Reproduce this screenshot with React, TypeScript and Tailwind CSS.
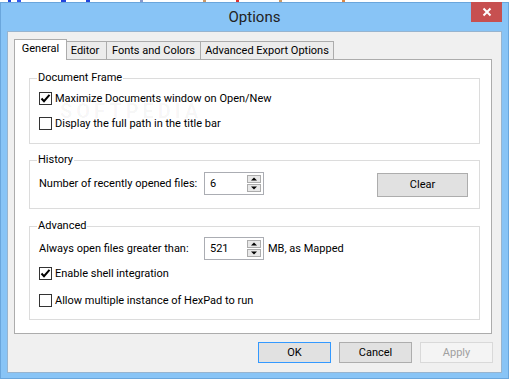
import React from "react";

function Check({ checked }: { checked: boolean }) {
  return (
    <span className="w-[13px] h-[13px] border border-[#333333] bg-white flex items-center justify-center shrink-0">
      {checked && (
        <svg width="11" height="11" viewBox="0 0 11 11">
          <path d="M1.5 5.5 L4 8.2 L9.5 1.8" fill="none" stroke="#000" strokeWidth="2" />
        </svg>
      )}
    </span>
  );
}

function CheckRow({ checked, label, h }: { checked: boolean; label: string; h: string }) {
  return (
    <div className={`flex items-center ${h}`}>
      <Check checked={checked} />
      <span className="ml-[3px] leading-[16px]">{label}</span>
    </div>
  );
}

function Arrow({ up }: { up: boolean }) {
  return (
    <span className="w-[14px] h-[8px] border border-[#acacac] bg-[#e8e8e8] flex items-center justify-center">
      <svg width="6" height="4" viewBox="0 0 6 4">
        {up ? <path d="M0 3.5 L3 0.5 L6 3.5 Z" fill="#000" /> : <path d="M0 0.5 L3 3.5 L6 0.5 Z" fill="#000" />}
      </svg>
    </span>
  );
}

function Spin({ value }: { value: string }) {
  return (
    <div className="w-[60px] h-[23px] border border-[#abadb3] bg-white flex items-center shrink-0">
      <span className="flex-1 pl-[5px] leading-[16px]">{value}</span>
      <div className="flex flex-col gap-[1px] mr-[2px]">
        <Arrow up />
        <Arrow up={false} />
      </div>
    </div>
  );
}

function Group({ title, className, children }: { title: string; className: string; children: React.ReactNode }) {
  return (
    <div className={`relative border border-[#dcdcdc] pl-[9px] pr-[11px] ${className}`}>
      <span className="absolute left-[7px] top-[-9px] bg-white px-[1px] leading-[16px]">{title}</span>
      {children}
    </div>
  );
}

function Btn({ label, kind }: { label: string; kind: "default" | "normal" | "disabled" }) {
  const cls =
    kind === "default"
      ? "border-[#3399ff] bg-[#e1e1e1] text-black"
      : kind === "normal"
      ? "border-[#adadad] bg-[#e1e1e1] text-black"
      : "border-[#d9d9d9] bg-[#f4f4f4] text-[#a0a0a0]";
  return (
    <div className={`w-[73px] h-[21px] border flex items-center justify-center leading-[16px] ${cls}`}>{label}</div>
  );
}

export default function App() {
  return (
    <div className="w-[509px] h-[379px] flex flex-col bg-white font-['Roboto',sans-serif] text-[11px] text-black overflow-hidden whitespace-nowrap">
      <div className="h-[2px] flex shrink-0">
        <span className="w-[8px]" />
        <span className="w-[3px] bg-[#2244dd]" />
        <span className="w-[6px]" />
        <span className="w-[4px] bg-[#3355ee]" />
        <span className="w-[40px]" />
        <span className="w-[5px] bg-[#2244dd]" />
        <span className="w-[20px]" />
        <span className="w-[4px] bg-[#2244dd]" />
        <span className="w-[50px]" />
        <span className="w-[3px] bg-[#8899cc]" />
        <span className="w-[60px]" />
        <span className="w-[3px] bg-[#cc9966]" />
        <span className="w-[30px]" />
        <span className="w-[3px] bg-[#dd3333]" />
        <span className="w-[40px]" />
        <span className="w-[3px] bg-[#cc9966]" />
        <span className="w-[60px]" />
        <span className="w-[3px] bg-[#dd8844]" />
      </div>
      <div className="flex-1 flex flex-col border border-[#6aa6dc] bg-[#88c4f6] px-[6px] pb-[5px]">
        <div className="h-[28px] flex items-start shrink-0">
          <span className="w-[31px]" />
          <span className="flex-1 text-center text-[15px] leading-[20px] pt-[4px] text-[#222]">Options</span>
          <span className="w-[31px] h-[20px] -mt-[1px] bg-[#c75050] flex items-center justify-center">
            <svg width="10" height="10" viewBox="0 0 10 10">
              <path d="M1.5 1.5 L8.5 8.5 M8.5 1.5 L1.5 8.5" stroke="#fff" strokeWidth="2" />
            </svg>
          </span>
        </div>
        <div className="flex-1 border border-[#97b4cf] bg-[#f0f0f0] flex flex-col pl-[6px] pr-[9px] pt-[7px] pb-[9px]">
          <div className="h-[20px] flex items-end shrink-0 relative z-10">
            <div className="w-[53px] h-[21px] -mb-[1px] bg-white border-l border-t border-r border-[#acacac] flex items-center justify-center pb-[2px] leading-[16px]">
              General
            </div>
            <div className="w-[40px] h-[18px] bg-[#ececec] border-t border-r border-[#acacac] flex items-center justify-center pr-[3px] leading-[16px]">
              Editor
            </div>
            <div className="w-[94px] h-[18px] bg-[#ececec] border-t border-r border-[#acacac] flex items-center justify-center leading-[16px]">
              Fonts and Colors
            </div>
            <div className="w-[133px] h-[18px] bg-[#ececec] border-t border-r border-[#acacac] flex items-center justify-center leading-[16px]">
              Advanced Export Options
            </div>
          </div>
          <div className="h-[275px] shrink-0 bg-white border border-[#acacac] pl-[14px] pr-[11px] flex flex-col relative">
            <Group title="Document Frame" className="mt-[18px] pt-[7px] pb-[7px]">
              <CheckRow checked label="Maximize Documents window on Open/New" h="h-[25px]" />
              <CheckRow checked={false} label="Display the full path in the title bar" h="h-[25px]" />
            </Group>
            <Group title="History" className="mt-[16px] pt-[11px] pb-[11px]">
              <div className="h-[25px] flex items-start">
                <span className="w-[165px] h-[23px] flex items-center leading-[16px]">Number of recently opened files:</span>
                <Spin value="6" />
                <div className="ml-auto mt-[1px] w-[91px] h-[24px] border border-[#adadad] bg-[#e1e1e1] flex items-center justify-center leading-[16px]">
                  Clear
                </div>
              </div>
            </Group>
            <Group title="Advanced" className="mt-[17px] pt-[10px] pb-[5px]">
              <div className="h-[23px] flex items-center">
                <span className="w-[165px] leading-[16px]">Always open files greater than:</span>
                <Spin value="521" />
                <span className="ml-[4px] leading-[16px]">MB, as Mapped</span>
              </div>
              <CheckRow checked label="Enable shell integration" h="h-[27px]" />
              <CheckRow checked={false} label="Allow multiple instance of HexPad to run" h="h-[27px]" />
            </Group>
            <span className="absolute left-[45px] top-[41px] text-[20px] font-bold tracking-[4px] text-[#000000]/[0.04] pointer-events-none leading-[20px]">
              SOFTPEDIA
            </span>
          </div>
          <div className="mt-[8px] flex justify-end gap-[8px] -mr-[1px]">
            <Btn label="OK" kind="default" />
            <Btn label="Cancel" kind="normal" />
            <Btn label="Apply" kind="disabled" />
          </div>
        </div>
      </div>
    </div>
  );
}
